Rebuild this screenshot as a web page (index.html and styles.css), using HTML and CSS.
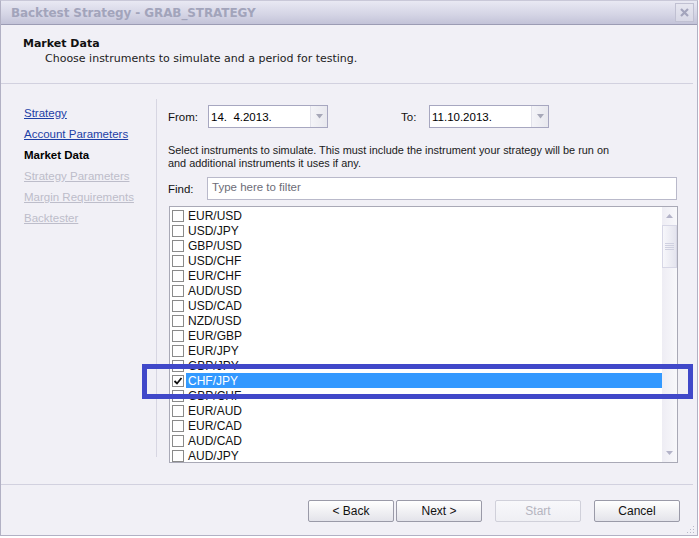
FILE: index.html
```html
<!DOCTYPE html>
<html lang="en">
<head>
    <meta charset="UTF-8">
    <title>Backtest Strategy - GRAB_STRATEGY</title>
    <link rel="stylesheet" href="styles.css">
</head>
<body>
<div class="window">
    <div class="titlebar">
        <span class="title">Backtest Strategy - GRAB_STRATEGY</span>
        <span class="close">
            <svg width="11" height="11" viewBox="0 0 11 11"><path d="M2 2 L9 9 M9 2 L2 9" stroke="#a3a4bc" stroke-width="2.2"/></svg>
        </span>
    </div>

    <div class="header">
        <div class="header-title">Market Data</div>
        <div class="header-sub">Choose instruments to simulate and a period for testing.</div>
    </div>

    <div class="main">
        <ul class="steps">
            <li><a href="#">Strategy</a></li>
            <li><a href="#">Account Parameters</a></li>
            <li class="current">Market Data</li>
            <li><a class="off" href="#">Strategy Parameters</a></li>
            <li><a class="off" href="#">Margin Requirements</a></li>
            <li><a class="off" href="#">Backtester</a></li>
        </ul>

        <div class="content">
            <div class="dates">
                <span class="lbl">From:</span>
                <div class="datebox"><span>14.&nbsp; 4.2013.</span><span class="drop"><svg width="7" height="5" viewBox="0 0 7 5"><path d="M0 0 H7 L3.5 4.5 Z" fill="#a7a8b8"/></svg></span></div>
                <span class="lbl lbl-to">To:</span>
                <div class="datebox"><span>11.10.2013.</span><span class="drop"><svg width="7" height="5" viewBox="0 0 7 5"><path d="M0 0 H7 L3.5 4.5 Z" fill="#a7a8b8"/></svg></span></div>
            </div>

            <p class="hint">Select instruments to simulate. This must include the instrument your strategy will be run on<br>and additional instruments it uses if any.</p>

            <div class="find">
                <span class="lbl">Find:</span>
                <div class="findbox">Type here to filter</div>
            </div>

            <div class="list">
                <div class="rows">
                    <div class="row"><span class="cb"></span><span class="name">EUR/USD</span></div>
                    <div class="row"><span class="cb"></span><span class="name">USD/JPY</span></div>
                    <div class="row"><span class="cb"></span><span class="name">GBP/USD</span></div>
                    <div class="row"><span class="cb"></span><span class="name">USD/CHF</span></div>
                    <div class="row"><span class="cb"></span><span class="name">EUR/CHF</span></div>
                    <div class="row"><span class="cb"></span><span class="name">AUD/USD</span></div>
                    <div class="row"><span class="cb"></span><span class="name">USD/CAD</span></div>
                    <div class="row"><span class="cb"></span><span class="name">NZD/USD</span></div>
                    <div class="row"><span class="cb"></span><span class="name">EUR/GBP</span></div>
                    <div class="row"><span class="cb"></span><span class="name">EUR/JPY</span></div>
                    <div class="row"><span class="cb"></span><span class="name">GBP/JPY</span></div>
                    <div class="row selected"><span class="cb"><svg width="10" height="10" viewBox="0 0 10 10"><path d="M1.5 5 L4 7.5 L8.5 2" fill="none" stroke="#111" stroke-width="1.8"/></svg></span><span class="name">CHF/JPY</span></div>
                    <div class="row"><span class="cb"></span><span class="name">GBP/CHF</span></div>
                    <div class="row"><span class="cb"></span><span class="name">EUR/AUD</span></div>
                    <div class="row"><span class="cb"></span><span class="name">EUR/CAD</span></div>
                    <div class="row"><span class="cb"></span><span class="name">AUD/CAD</span></div>
                    <div class="row"><span class="cb"></span><span class="name">AUD/JPY</span></div>
                </div>
                <div class="scrollbar">
                    <svg class="arrow" width="7" height="4" viewBox="0 0 7 4"><path d="M0 4 H7 L3.5 0 Z" fill="#b3b3c8"/></svg>
                    <div class="thumb">
                        <svg width="9" height="7" viewBox="0 0 9 7"><path d="M0 0.5 H9 M0 2.5 H9 M0 4.5 H9 M0 6.5 H9" stroke="#cfd0e0" stroke-width="1"/></svg>
                    </div>
                    <div class="track"></div>
                    <svg class="arrow" width="7" height="4" viewBox="0 0 7 4"><path d="M0 0 H7 L3.5 4 Z" fill="#b3b3c8"/></svg>
                </div>
            </div>
        </div>
    </div>

    <div class="footer">
        <button type="button">&lt; Back</button>
        <button type="button">Next &gt;</button>
        <button type="button" class="gap" disabled>Start</button>
        <button type="button" class="gap">Cancel</button>
        <svg class="grip" width="8" height="8" viewBox="0 0 8 8"><path d="M6 1h1v1h-1zM3 4h1v1h-1zM6 4h1v1h-1zM0 7h1v1h-1zM3 7h1v1h-1zM6 7h1v1h-1z" fill="#b8b8c8"/></svg>
    </div>

    <!-- highlight frame over the selected row -->
    <div class="marker"></div>
</div>
</body>
</html>
```

FILE: styles.css
```css
/* Dialog */
* {
    margin: 0;
    padding: 0;
    box-sizing: border-box;
}
body {
    background-color: #ffffff;
    font-family: "Liberation Sans", Arial, sans-serif;
    font-size: 11px;
    color: #1a1a1a;
}
.window {
    position: relative;
    width: 698px;
    height: 536px;
    background-color: #f1f0f6;
    border: 1px solid #b2b1c4;
    border-top-color: #c9c8d8;
    display: flex;
    flex-direction: column;
}
.titlebar {
    height: 24px;
    flex: none;
    display: flex;
    align-items: center;
    justify-content: space-between;
    padding: 0 3px 0 10px;
    background: linear-gradient(#e9e9f3, #d6d6e6 55%, #c3c3d8);
    border-bottom: 1px solid #9c9cb4;
}
.title {
    font-family: "DejaVu Sans", Verdana, sans-serif;
    font-weight: bold;
    font-size: 12px;
    color: #a2a4bb;
    letter-spacing: -0.1px;
}
.close {
    width: 19px;
    height: 19px;
    border: 1px solid #c0c0d2;
    background: linear-gradient(#e6e6f0, #d8d8e6);
    display: flex;
    align-items: center;
    justify-content: center;
}
.header {
    height: 59px;
    flex: none;
    padding: 12px 0 0 22px;
    margin-right: 4px;
    border-bottom: 1px solid #d2d1df;
    font-family: "DejaVu Sans", Verdana, sans-serif;
}
.header-title {
    font-weight: bold;
    font-size: 11px;
    color: #111;
    line-height: 14px;
}
.header-sub {
    font-size: 11px;
    color: #222;
    padding-left: 22px;
    line-height: 16px;
}
.main {
    height: 401px;
    flex: none;
    display: flex;
    border-bottom: 1px solid #d2d1df;
    margin-right: 4px;
}
.steps {
    list-style: none;
    width: 156px;
    flex: none;
    margin: 15px 0 27px;
    padding: 7px 0 0 23px;
    border-right: 1px solid #d7d6e2;
}
.steps li {
    height: 21px;
    line-height: 14px;
    font-size: 11.5px;
}
.steps a {
    color: #1d3fa6;
    text-decoration: underline;
}
.steps a.off {
    color: #bdbdca;
}
.steps .current {
    font-weight: bold;
    color: #000;
}
.content {
    flex: 1;
    padding: 21px 0 0 11px;
}
.dates {
    display: flex;
    align-items: center;
    height: 23px;
}
.lbl {
    width: 40px;
    flex: none;
    font-size: 11.5px;
    color: #111;
}
.lbl-to {
    margin-left: 73px;
    width: 28px;
}
.datebox {
    width: 120px;
    height: 23px;
    display: flex;
    align-items: center;
    justify-content: space-between;
    background-color: #fff;
    border: 1px solid #a7a7c0;
    padding-left: 2px;
    font-size: 11.5px;
    color: #000;
}
.drop {
    width: 17px;
    height: 21px;
    display: flex;
    align-items: center;
    justify-content: center;
    background: linear-gradient(90deg, #f4f4f8, #e8e8ee);
    border-left: 1px solid #e2e2ea;
}
.hint {
    margin-top: 16px;
    font-size: 10.9px;
    line-height: 13px;
    color: #1a1a1a;
}
.find {
    display: flex;
    align-items: center;
    margin-top: 7px;
}
.findbox {
    width: 470px;
    height: 23px;
    margin-left: -1px;
    background-color: #fff;
    border: 1px solid #b9b9ca;
    padding: 3px 4px;
    font-size: 11.5px;
    color: #6d6d78;
}
.list {
    margin: 6px 0 0 1px;
    width: 509px;
    height: 257px;
    background-color: #fff;
    border: 1px solid #a9a9b6;
    display: flex;
}
.rows {
    flex: 1;
    padding-top: 1px;
}
.row {
    height: 15px;
    display: flex;
    align-items: center;
    padding-left: 2px;
}
.cb {
    width: 12px;
    height: 12px;
    flex: none;
    border: 1px solid #8a8a8a;
    background-color: #fff;
    display: flex;
    align-items: center;
    justify-content: center;
}
.name {
    flex: 1;
    height: 15px;
    line-height: 16px;
    margin-left: 2px;
    padding-left: 2px;
    font-size: 12px;
    color: #111;
}
.selected .name {
    background-color: #3399ff;
    color: #fff;
}
.scrollbar {
    width: 15px;
    flex: none;
    display: flex;
    flex-direction: column;
    align-items: center;
    background: linear-gradient(90deg, #eeedf4, #f8f8fb);
}
.arrow {
    margin: 7px 0 7px;
    flex: none;
}
.thumb {
    width: 15px;
    height: 43px;
    border: 1px solid #d7d7e6;
    background: linear-gradient(90deg, #f7f7fb, #e4e4ee);
    display: flex;
    align-items: center;
    justify-content: center;
}
.track {
    flex: 1;
}
.footer {
    flex: 1;
    display: flex;
    align-items: flex-start;
    padding: 15px 0 0 307px;
    position: relative;
}
.footer button {
    width: 86px;
    height: 22px;
    margin-right: 2px;
    font-family: "Liberation Sans", Arial, sans-serif;
    font-size: 12px;
    color: #111;
    background: linear-gradient(#ffffff, #f1f1f4 50%, #e3e3ea);
    border: 1px solid #9a9aa8;
    border-radius: 2px;
}
.footer button.gap {
    margin-left: 11px;
}
.footer button:disabled {
    color: #b5b5c0;
    border-color: #d0d0da;
    background: linear-gradient(#f8f8fb, #efeff4);
}
.grip {
    position: absolute;
    right: 2px;
    bottom: 2px;
}
.marker {
    position: absolute;
    left: 141px;
    top: 363px;
    width: 551px;
    height: 35px;
    border: 5px solid #4048c9;
    pointer-events: none;
}
```
